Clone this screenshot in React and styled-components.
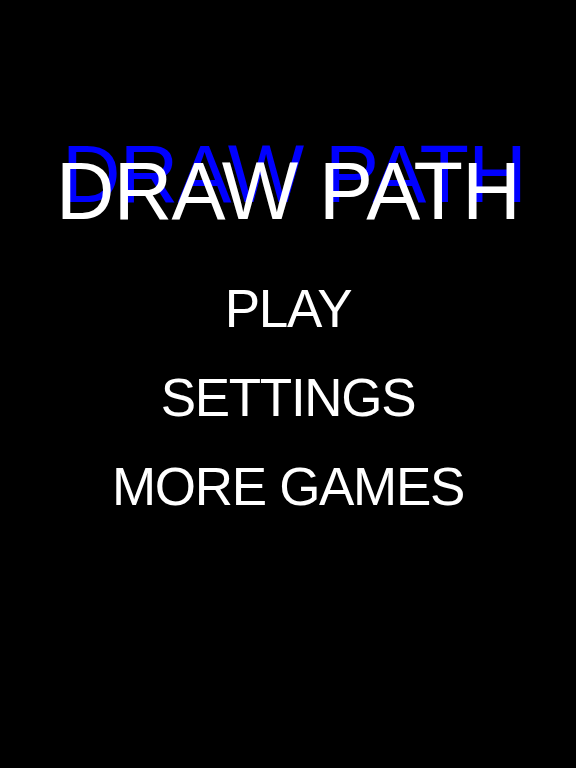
import styled, { createGlobalStyle } from "styled-components";

const Global = createGlobalStyle`
  html, body {
    margin: 0;
    padding: 0;
    background: #000;
  }
  body {
    font-family: "Liberation Sans", Arial, Helvetica, sans-serif;
  }
`;

const Pantalla = styled.main`
  width: 576px;
  height: 768px;
  background: #000;
  display: flex;
  flex-direction: column;
  align-items: center;
  padding-top: 151px;
  box-sizing: border-box;
  overflow: hidden;
`;

const Titulo = styled.h1`
  margin: 0;
  font-weight: 400;
  font-size: 81px;
  line-height: 81px;
  letter-spacing: -0.8px;
  color: #fff;
  white-space: nowrap;
  text-shadow: 6px -17px 0 #0000ff;
`;

const Menu = styled.nav`
  margin-top: 32px;
  display: flex;
  flex-direction: column;
  align-items: center;
`;

const Opcion = styled.a`
  font-size: 53px;
  line-height: 89px;
  letter-spacing: -1.3px;
  color: #fff;
  text-decoration: none;
  white-space: nowrap;
  cursor: pointer;
`;

const App = () => {
  return (
    <>
      <Global />
      <Pantalla>
        <Titulo>DRAW PATH</Titulo>
        <Menu>
          <Opcion>PLAY</Opcion>
          <Opcion>SETTINGS</Opcion>
          <Opcion>MORE GAMES</Opcion>
        </Menu>
      </Pantalla>
    </>
  );
};

export default App;
